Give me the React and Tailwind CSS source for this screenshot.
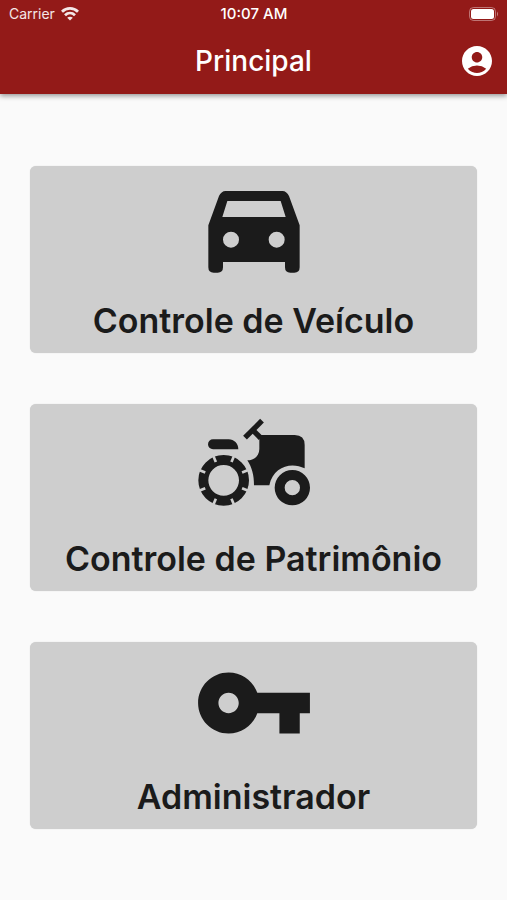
import { MdAccountCircle } from 'react-icons/md'

function CarIcon() {
  return (
    <svg viewBox="0 0 366 366" className="size-[122px]" fill="currentColor" aria-hidden="true">
      <path
        fillRule="evenodd"
        d="M98 75H268C277 75 284 81 288 90L320 178V304Q320 320 304 320H292Q276 320 276 304V288H90V304Q90 320 74 320H62Q46 320 46 304V178L78 90C82 81 89 75 98 75ZM103 105L88 153H278L263 105ZM114 197a24 24 0 1 0 0 48a24 24 0 1 0 0-48ZM251 197a24 24 0 1 0 0 48a24 24 0 1 0 0-48Z"
      />
    </svg>
  )
}

const treads = [23, 67, 113, 157, 203, 247, 293, 337]

function TractorIcon() {
  return (
    <svg viewBox="0 0 366 366" className="size-[122px]" fill="currentColor" aria-hidden="true">
      <g transform="translate(-39 3)">
        <path d="M99 103H146C162 103 175 116 175 133H99A15 15 0 0 1 99 103Z" />
        <path d="M195 98L246 47" fill="none" stroke="currentColor" strokeWidth="16" />
        <path d="M219 76L242 99" fill="none" stroke="currentColor" strokeWidth="16" />
        <path d="M238 90H344Q374 90 374 120V190C335 170 280 183 268 241H222C222 210 216 188 202 166C222 166 238 153 238 132Z" />
        <path fillRule="evenodd" d="M337 195a53 53 0 1 0 0 106a53 53 0 1 0 0-106ZM337 225a23 23 0 1 1 0 46a23 23 0 1 1 0-46Z" />
        <circle cx="131" cy="226" r="61" fill="none" stroke="currentColor" strokeWidth="30" />
        {treads.map((angle) => (
          <path key={angle} d="M127 146h8v20h-8z" fill="#cecece" transform={`rotate(${angle} 131 226)`} />
        ))}
      </g>
    </svg>
  )
}

function KeyIcon() {
  return (
    <svg viewBox="0 0 24 24" className="size-[122px]" fill="currentColor" aria-hidden="true">
      <path d="M12.65 10C11.83 7.67 9.61 6 7 6c-3.31 0-6 2.69-6 6s2.69 6 6 6c2.61 0 4.83-1.67 5.65-4H17v4h4v-4h2v-4H12.65zM7 14c-1.1 0-2-.9-2-2s.9-2 2-2 2 .9 2 2-.9 2-2 2z" />
    </svg>
  )
}

function WifiIcon() {
  return (
    <svg viewBox="0 0 18 14" className="h-[14px] w-[18px]" fill="none" stroke="currentColor" strokeWidth="2.8" aria-hidden="true">
      <path d="M1 4.7C5.5 0.3 12.5 0.3 17 4.7" />
      <path d="M4 8.2C7 5.4 11 5.4 14 8.2" />
      <path d="M9 13.5L6.2 10.7C7.8 9.3 10.2 9.3 11.8 10.7Z" fill="currentColor" stroke="none" />
    </svg>
  )
}

function BatteryIcon() {
  return (
    <svg viewBox="0 0 30 14" className="h-[14px] w-[30px]" aria-hidden="true">
      <rect x="0.5" y="0.5" width="26" height="13" rx="4" fill="none" stroke="#fff" strokeOpacity="0.4" />
      <rect x="2" y="2" width="23" height="10" rx="2.5" fill="#fff" />
      <path d="M28 4.5Q30 7 28 9.5Z" fill="#fff" fillOpacity="0.45" />
    </svg>
  )
}

const menu = [
  { label: 'Controle de Veículo', Icon: CarIcon },
  { label: 'Controle de Patrimônio', Icon: TractorIcon },
  { label: 'Administrador', Icon: KeyIcon },
]

export default function App() {
  return (
    <div className="min-h-screen bg-[#fafafa] font-['Inter',sans-serif] text-[#1b1b1b]">
      <header className="bg-[#931a18] text-white shadow-[0_2px_5px_rgba(0,0,0,0.4)]">
        <div className="grid h-7 grid-cols-3 items-center pr-2 pl-[9px] text-sm">
          <div className="flex items-center gap-1.5 text-white/90">
            <span>Carrier</span>
            <WifiIcon />
          </div>
          <span className="text-center text-[15px] font-medium">10:07 AM</span>
          <div className="flex justify-end">
            <BatteryIcon />
          </div>
        </div>
        <div className="grid h-[66px] grid-cols-[1fr_auto_1fr] items-center px-3">
          <h1 className="col-start-2 text-[28px] font-medium">Principal</h1>
          <button type="button" aria-label="Conta" className="justify-self-end">
            <MdAccountCircle className="size-9" />
          </button>
        </div>
      </header>
      <main className="flex flex-col gap-[51px] px-[30px] pt-[72px] pb-[70px]">
        {menu.map(({ label, Icon }) => (
          <button
            key={label}
            type="button"
            className="flex w-full flex-col items-center rounded-md bg-[#cecece] pb-2 shadow-[0_0_1px_rgba(0,0,0,0.2)]"
          >
            <Icon />
            <span className="mt-[9px] text-[34px] leading-[48px] font-semibold">{label}</span>
          </button>
        ))}
      </main>
    </div>
  )
}
